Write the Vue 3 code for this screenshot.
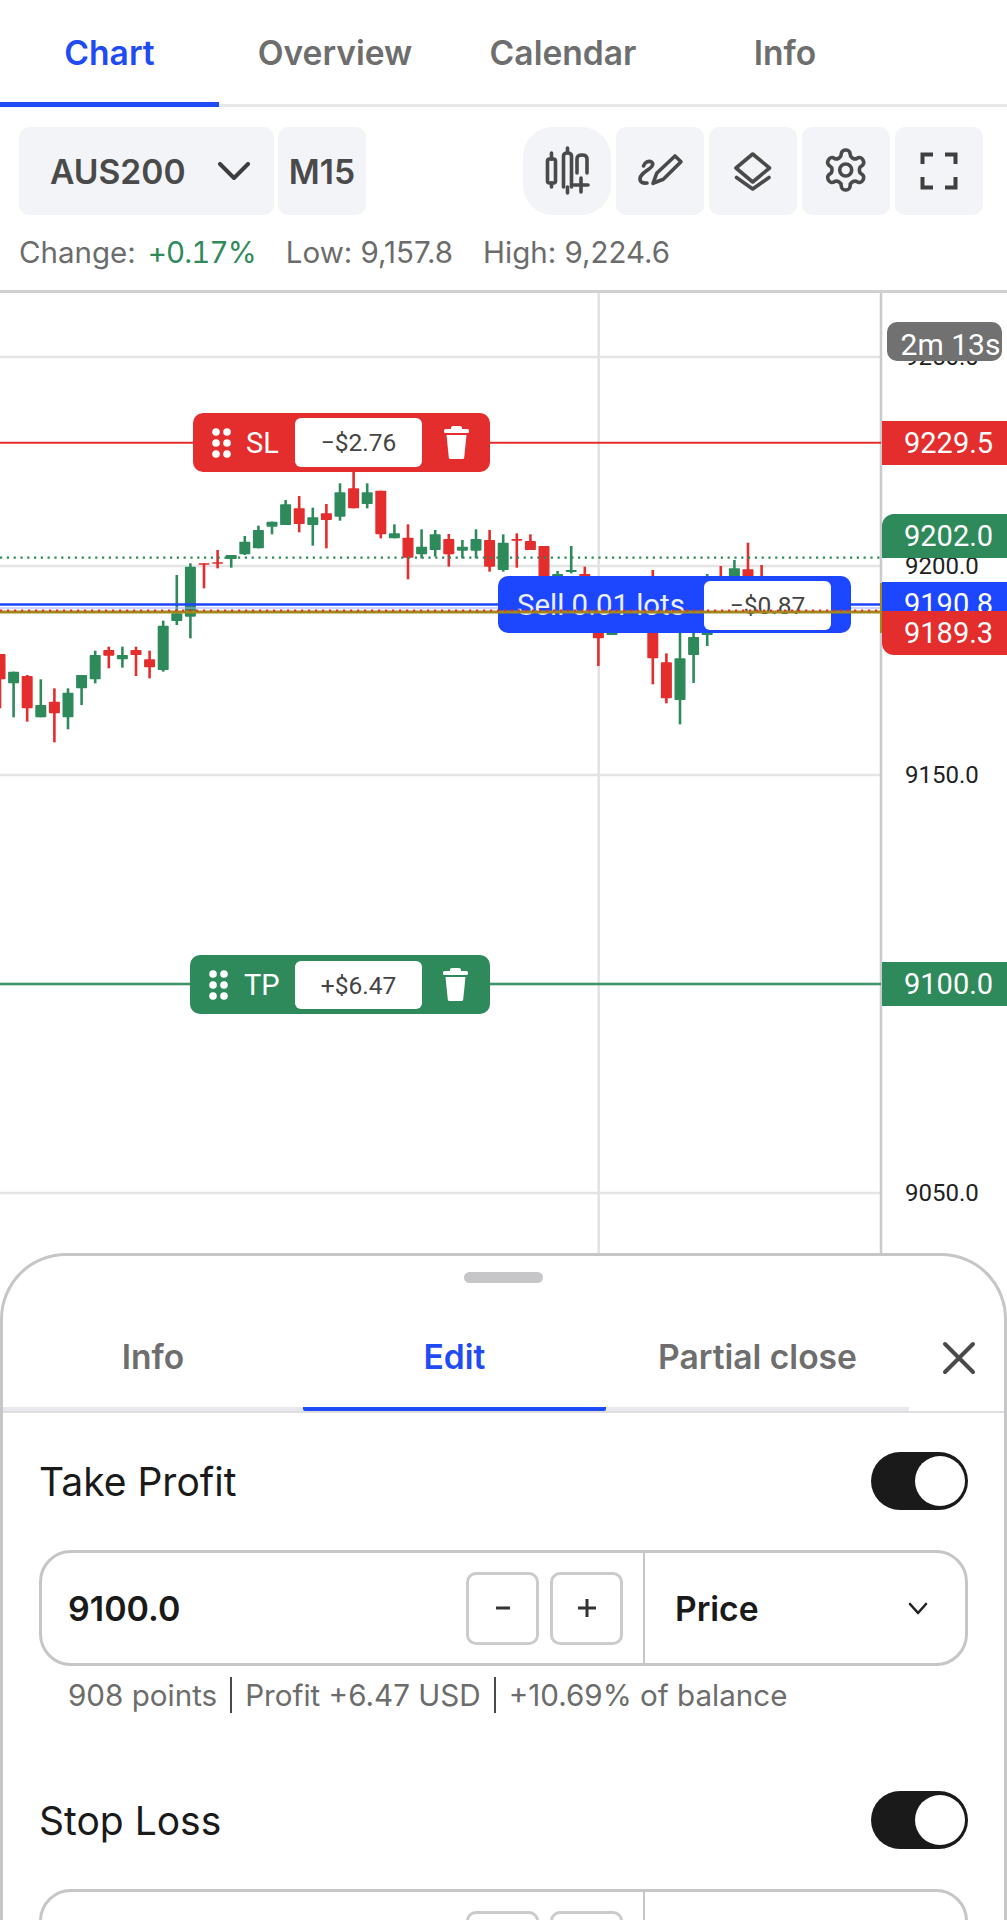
<script setup>
const mainTabs = [
  { label: 'Chart', w: 219, active: true },
  { label: 'Overview', w: 232 },
  { label: 'Calendar', w: 224 },
  { label: 'Info', w: 220 },
]
const sheetTabs = [{ label: 'Info' }, { label: 'Edit', active: true }, { label: 'Partial close' }]

const forms = [
  { title: 'Take Profit', value: '9100.0', hint: ['908 points', 'Profit +6.47 USD', '+10.69% of balance'] },
  { title: 'Stop Loss', value: '9229.5', hint: [] },
]

// price axis: 50 points = 209px
const priceY = (p) => 273 + (9200 - p) * 4.18
const gridPrices = [9250, 9200, 9150, 9100, 9050]

// [colour, wick top, body top, body bottom, wick bottom], traced from the chart
const raw = [
  ['r', 762, 762, 838, 925], ['g', 815, 815, 850, 952], ['r', 825, 828, 925, 965], ['g', 838, 915, 952, 952],
  ['r', 865, 905, 940, 1027], ['g', 865, 878, 952, 988], ['g', 825, 825, 865, 915], ['g', 752, 765, 838, 850],
  ['r', 740, 750, 767, 805], ['g', 740, 765, 778, 803], ['r', 740, 750, 765, 828], ['r', 752, 778, 802, 835],
  ['g', 662, 677, 810, 815], ['g', 525, 640, 663, 675], ['g', 490, 500, 650, 715], ['r', 490, 490, 494, 565],
  ['r', 450, 487, 491, 505], ['g', 465, 465, 477, 503], ['g', 408, 425, 463, 465], ['g', 377, 390, 445, 445],
  ['g', 365, 365, 380, 403], ['g', 300, 313, 375, 375], ['r', 288, 325, 372, 397], ['g', 323, 352, 375, 437],
  ['r', 312, 340, 360, 445], ['g', 250, 277, 350, 362], ['r', 215, 265, 325, 325], ['g', 250, 277, 312, 325],
  ['r', 272, 272, 403, 415], ['g', 373, 400, 415, 415], ['r', 373, 413, 473, 538], ['g', 388, 440, 463, 475],
  ['g', 390, 403, 450, 470], ['r', 402, 417, 463, 500], ['g', 420, 440, 452, 475], ['g', 388, 417, 452, 475],
  ['r', 390, 420, 500, 515], ['g', 403, 428, 510, 515], ['r', 400, 417, 422, 503], ['r', 403, 423, 450, 450],
  ['r', 438, 438, 560, 560], ['g', 513, 522, 600, 620], ['g', 438, 510, 516, 520], ['r', 500, 522, 620, 640],
  ['r', 560, 640, 715, 798], ['g', 600, 640, 705, 705], null, null,
  ['r', 510, 600, 775, 853], ['r', 760, 787, 895, 910], ['g', 640, 775, 900, 973], ['g', 620, 711, 765, 849],
  ['g', 522, 560, 705, 738], ['r', 498, 560, 650, 660], ['g', 480, 505, 620, 640], ['r', 428, 508, 600, 620],
  ['r', 495, 540, 600, 620],
]
const toY = (z) => 107 + z / 3
const candles = raw
  .map((c, i) => c && {
    x: i * 13.6,
    fill: c[0] === 'r' ? '#e42d2d' : '#2f8a5b',
    top: toY(c[1]),
    bodyTop: toY(c[2]),
    bodyH: Math.max((c[3] - c[2]) / 3, 1.5),
    bottom: toY(c[4]),
  })
  .filter(Boolean)

const axisTexts = [9250, 9200, 9150, 9050]
const tags = [
  { price: 9229.5, cls: 'red' },
  { price: 9202.0, cls: 'green top', offset: -44 },
  { price: 9190.8, cls: 'blue' },
  { price: 9189.3, cls: 'red bottom', offset: 0 },
  { price: 9100.0, cls: 'green' },
]
const tagStyle = (t) => ({ top: priceY(t.price) + (t.offset ?? -22) + 'px' })
</script>

<template>
  <div class="page">
    <header class="head">
      <nav class="main-tabs">
        <div
          v-for="t in mainTabs"
          :key="t.label"
          class="main-tab"
          :class="{ on: t.active }"
          :style="{ width: t.w + 'px' }"
        >{{ t.label }}</div>
      </nav>

      <div class="toolbar">
        <div class="tool symbol">
          <span>AUS200</span>
          <svg width="32" height="18" viewBox="0 0 32 18" fill="none" stroke="#3d3d3d" stroke-width="4" stroke-linecap="round" stroke-linejoin="round"><path d="M2 2l14 14L30 2" /></svg>
        </div>
        <div class="tool period">M15</div>
        <div class="tool-right">
          <button class="icon-btn round">
            <svg viewBox="0 0 88 88" fill="none" stroke="#4a4a4a" stroke-width="3.6" stroke-linecap="round" stroke-linejoin="round">
              <rect x="24.5" y="32" width="8" height="24" rx="2" />
              <path d="M28.5 26v6M28.5 56v4" />
              <path d="M44.500 21v5M44.500 60v6M40.500 60V29q0-3 4-3t4 3v31" />
              <path d="M54 46V32q0-4 5-4t5 4v14" />
              <path d="M51 58h14M58 51v14" />
            </svg>
          </button>
          <button class="icon-btn">
            <svg viewBox="0 0 88 88" fill="none" stroke="#4a4a4a" stroke-width="3.6" stroke-linecap="round" stroke-linejoin="round">
              <path d="M37 56.300l3.700-10L59 29l6 5.700L47.300 52.300z" />
              <path d="M27.500 39c1-4 5.500-5.500 8-4 2.500 1.800.8 4.800-2.500 7-4.500 3-9 6-9 10 0 3.500 3.500 4.500 7 4" />
            </svg>
          </button>
          <button class="icon-btn">
            <svg viewBox="0 0 88 88" fill="none" stroke="#4a4a4a" stroke-width="3.6" stroke-linejoin="round" stroke-linecap="round">
              <path d="M43.700 27L60.500 41 43.700 55 27 41z" />
              <path d="M27.500 50.500l16.200 11.500 16.300-11.500" />
            </svg>
          </button>
          <button class="icon-btn">
            <svg viewBox="0 0 88 88">
              <g transform="translate(19.700 19) scale(2)" fill="none" stroke="#4a4a4a" stroke-width="1.800" stroke-linejoin="round">
                <path d="M12.220 2h-.44a2 2 0 0 0-2 2v.18a2 2 0 0 1-1 1.730l-.43.25a2 2 0 0 1-2 0l-.15-.08a2 2 0 0 0-2.730.73l-.22.38a2 2 0 0 0 .73 2.730l.15.1a2 2 0 0 1 1 1.720v.51a2 2 0 0 1-1 1.740l-.15.09a2 2 0 0 0-.73 2.730l.22.38a2 2 0 0 0 2.730.73l.15-.08a2 2 0 0 1 2 0l.43.25a2 2 0 0 1 1 1.730V20a2 2 0 0 0 2 2h.44a2 2 0 0 0 2-2v-.18a2 2 0 0 1 1-1.730l.43-.25a2 2 0 0 1 2 0l.15.08a2 2 0 0 0 2.730-.73l.22-.39a2 2 0 0 0-.73-2.730l-.15-.08a2 2 0 0 1-1-1.740v-.5a2 2 0 0 1 1-1.740l.15-.09a2 2 0 0 0 .73-2.730l-.22-.38a2 2 0 0 0-2.730-.73l-.15.08a2 2 0 0 1-2 0l-.43-.25a2 2 0 0 1-1-1.730V4a2 2 0 0 0-2-2z" />
                <circle cx="12" cy="12" r="3" />
              </g>
            </svg>
          </button>
          <button class="icon-btn">
            <svg viewBox="0 0 88 88" fill="none" stroke="#3f3f3f" stroke-width="4">
              <path d="M27.500 37V27.500H38M50 27.500h10.500V37M27.500 50v10.500H38M50 60.500h10.500V50" />
            </svg>
          </button>
        </div>
      </div>

      <div class="stats">
        <span>Change:</span><span class="up">+0.17%</span><span class="stat">Low: 9,157.8</span><span class="stat">High: 9,224.6</span>
      </div>
    </header>

    <section class="chart">
      <svg class="plot" width="1007" height="960" viewBox="0 0 1007 960">
        <line v-for="p in gridPrices" :key="p" x1="0" x2="881" :y1="priceY(p)" :y2="priceY(p)" stroke="#e4e4e6" stroke-width="2.500" />
        <line x1="598.700" x2="598.700" y1="0" y2="960" stroke="#e2e2e4" stroke-width="2.500" />
        <line x1="881" x2="881" y1="0" y2="960" stroke="#cbcbcd" stroke-width="2.500" />
        <g v-for="(c, i) in candles" :key="i" :fill="c.fill">
          <rect :x="c.x - 1.300" :y="c.top" width="2.600" :height="c.bottom - c.top" />
          <rect :x="c.x - 5.500" :y="c.bodyTop" width="11" :height="c.bodyH" rx="0.800" />
        </g>
        <line x1="0" x2="881" :y1="priceY(9202)" :y2="priceY(9202)" stroke="#2f8a5b" stroke-width="2.200" stroke-dasharray="2.200 4.600" />
        <line x1="0" x2="881" :y1="priceY(9229.5)" :y2="priceY(9229.5)" stroke="#e42d2d" stroke-width="2" />
        <line x1="0" x2="881" :y1="priceY(9100)" :y2="priceY(9100)" stroke="#3f9468" stroke-width="2.400" />
        <line x1="0" x2="881" y1="311.500" y2="311.500" stroke="#1c46ff" stroke-width="2.400" />
        <line x1="0" x2="881" y1="315" y2="315" stroke="#9db0ff" stroke-width="1" />
      </svg>

      <span v-for="p in axisTexts" :key="p" class="axis-text" :style="{ top: priceY(p) - 15 + 'px' }">{{ p.toFixed(1) }}</span>
      <div class="timer">2m 13s</div>

      <div class="order-tag red-tag sl">
        <svg class="grip" width="19" height="30" viewBox="0 0 19 30" fill="#fff"><circle cx="4" cy="4" r="3.800" /><circle cx="15" cy="4" r="3.800" /><circle cx="4" cy="15" r="3.800" /><circle cx="15" cy="15" r="3.800" /><circle cx="4" cy="26" r="3.800" /><circle cx="15" cy="26" r="3.800" /></svg>
        <span class="tag-name">SL</span>
        <span class="tag-val">−$2.76</span>
        <svg class="trash" width="25" height="33" viewBox="0 0 25 33" fill="#fff"><rect x="7" y="0" width="11" height="5" rx="2" /><rect x="0" y="3" width="25" height="4" rx="1.500" /><path d="M2.500 9h20l-2.300 22.500q-.2 1.500-1.700 1.500H6.500q-1.500 0-1.700-1.500z" /></svg>
      </div>

      <div class="order-tag green-tag tp">
        <svg class="grip" width="19" height="30" viewBox="0 0 19 30" fill="#fff"><circle cx="4" cy="4" r="3.800" /><circle cx="15" cy="4" r="3.800" /><circle cx="4" cy="15" r="3.800" /><circle cx="15" cy="15" r="3.800" /><circle cx="4" cy="26" r="3.800" /><circle cx="15" cy="26" r="3.800" /></svg>
        <span class="tag-name">TP</span>
        <span class="tag-val">+$6.47</span>
        <svg class="trash" width="25" height="33" viewBox="0 0 25 33" fill="#fff"><rect x="7" y="0" width="11" height="5" rx="2" /><rect x="0" y="3" width="25" height="4" rx="1.500" /><path d="M2.500 9h20l-2.300 22.500q-.2 1.500-1.700 1.500H6.500q-1.500 0-1.700-1.500z" /></svg>
      </div>

      <div class="order-tag blue-tag sell">
        <span class="sell-name">Sell 0.01 lots</span>
        <span class="tag-val">−$0.87</span>
      </div>

      <span v-for="t in tags" :key="t.price" class="price-tag" :class="t.cls" :style="tagStyle(t)">{{ t.price.toFixed(1) }}</span>

      <svg class="over" width="1007" height="960" viewBox="0 0 1007 960">
        <line x1="0" x2="881" y1="319" y2="319" stroke="#a08a1c" stroke-width="2.800" />
        <line x1="0" x2="881" y1="317.500" y2="317.500" stroke="#e42d2d" stroke-width="2" stroke-dasharray="2.200 4.800" />
        <line x1="881" x2="881" y1="290" y2="340" stroke="#a08a1c" stroke-width="2" />
      </svg>
    </section>

    <section class="sheet">
      <div class="grabber"></div>
      <div class="sheet-tabs">
        <div class="sheet-tab-list">
          <div v-for="t in sheetTabs" :key="t.label" class="sheet-tab" :class="{ on: t.active }">{{ t.label }}</div>
        </div>
        <svg class="close" width="34" height="34" viewBox="0 0 34 34" fill="none" stroke="#4a4a4a" stroke-width="4" stroke-linecap="round"><path d="M3 3l28 28M31 3L3 31" /></svg>
      </div>

      <div class="forms">
        <div v-for="f in forms" :key="f.title" class="form">
          <div class="form-head">
            <span class="form-title">{{ f.title }}</span>
            <span class="switch"><i></i></span>
          </div>
          <div class="field">
            <div class="field-main">
              <span class="field-val">{{ f.value }}</span>
              <span class="step">
                <svg width="18" height="18" viewBox="0 0 18 18" stroke="#333" stroke-width="3"><path d="M2 9h14" /></svg>
              </span>
              <span class="step">
                <svg width="20" height="20" viewBox="0 0 20 20" stroke="#333" stroke-width="3"><path d="M1 10h18M10 1v18" /></svg>
              </span>
            </div>
            <div class="field-type">
              <span>Price</span>
              <svg width="22" height="13" viewBox="0 0 22 13" fill="none" stroke="#222" stroke-width="2.600" stroke-linecap="round" stroke-linejoin="round"><path d="M3 2l8 9 8-9" /></svg>
            </div>
          </div>
          <div v-if="f.hint.length" class="hint">
            <template v-for="(h, i) in f.hint" :key="h">
              <i v-if="i" class="hint-bar"></i>
              <span>{{ h }}</span>
            </template>
          </div>
        </div>
      </div>
    </section>
  </div>
</template>

<style scoped>
.page {
  width: 1007px;
  height: 1920px;
  overflow: hidden;
  background: #fff;
  font-family: Inter, "Liberation Sans", sans-serif;
}

.head {
  height: 293px;
  border-bottom: 3px solid #d0d0d2;
  box-sizing: border-box;
}
.main-tabs {
  display: flex;
  height: 107px;
  border-bottom: 3px solid #e8e8ea;
  box-sizing: border-box;
}
.main-tab {
  height: 107px;
  box-sizing: border-box;
  padding-top: 32px;
  text-align: center;
  font-size: 33.6px;
  line-height: 42px;
  font-weight: 600;
  color: #6e6e6e;
  flex: none;
}
.main-tab.on {
  color: #1f4bf5;
  border-bottom: 5px solid #1f4bf5;
}

.toolbar {
  display: flex;
  margin: 20px 24px 0 19px;
  height: 88px;
  gap: 4px;
}
.tool {
  display: flex;
  align-items: center;
  background: #f3f4f7;
  border-radius: 10px;
  font-size: 33.6px;
  font-weight: 600;
  color: #4a4a4a;
}
.symbol {
  width: 255px;
  padding: 0 24px 0 31px;
  box-sizing: border-box;
  justify-content: space-between;
}
.period {
  width: 88px;
  justify-content: center;
}
.tool-right {
  margin-left: auto;
  display: flex;
  gap: 5px;
}
.icon-btn {
  width: 88px;
  height: 88px;
  padding: 0;
  border: 0;
  background: #f3f4f7;
  border-radius: 10px;
}
.icon-btn.round {
  border-radius: 30px;
}
.icon-btn svg {
  display: block;
  width: 88px;
  height: 88px;
}

.stats {
  margin: 19px 0 0 19px;
  font-size: 29.5px;
  line-height: 36px;
  color: #6c6c6c;
  white-space: nowrap;
}
.stats .up {
  color: #2f8a5b;
  margin-left: 12px;
  font-variant-numeric: tabular-nums;
  letter-spacing: -0.9px;
}
.stats .stat {
  margin-left: 30px;
}

.chart {
  position: relative;
  height: 960px;
  font-family: Roboto, "Liberation Sans", sans-serif;
}
.plot,
.over {
  position: absolute;
  left: 0;
  top: 0;
  display: block;
}
.axis-text {
  position: absolute;
  left: 905px;
  font-size: 24px;
  line-height: 30px;
  color: #222;
}
.timer {
  position: absolute;
  left: 887px;
  top: 29px;
  width: 115px;
  height: 39px;
  padding-left: 12px;
  box-sizing: border-box;
  background: #717171;
  border-radius: 10px;
  color: #fff;
  font-size: 30px;
  line-height: 46px;
  text-align: center;
  white-space: nowrap;
}
.price-tag {
  position: absolute;
  left: 882px;
  width: 125px;
  height: 44px;
  padding-left: 22px;
  box-sizing: border-box;
  color: #fff;
  font-size: 29px;
  line-height: 44px;
}
.price-tag.red { background: #e42d2d; }
.price-tag.green { background: #2f8a5b; }
.price-tag.blue { background: #1c46ff; height: 30px; }
.price-tag.top { border-top-left-radius: 12px; }
.price-tag.bottom { border-bottom-left-radius: 12px; }

.order-tag {
  position: absolute;
  display: flex;
  align-items: center;
  height: 59px;
  box-sizing: border-box;
  border-radius: 10px;
  color: #fff;
  font-size: 29px;
}
.red-tag { background: #e42d2d; }
.green-tag { background: #2f8a5b; }
.blue-tag { background: #1c46ff; }
.sl {
  left: 193px;
  top: 120px;
  width: 297px;
  padding-left: 19px;
}
.tp {
  left: 190px;
  top: 662px;
  width: 300px;
  padding-left: 19px;
}
.sell {
  left: 498px;
  top: 283px;
  width: 353px;
  height: 57px;
  padding-left: 19px;
}
.sell .tag-val {
  position: absolute;
  left: 206px;
  top: 5px;
}
.sell-name {
  font-size: 29.4px;
  color: #eaf0ff;
}
.grip {
  flex: none;
}
.tag-name {
  position: absolute;
  left: 53px;
}
.tp .tag-name {
  left: 54px;
}
.tag-val {
  position: absolute;
  left: 102px;
  top: 5px;
  width: 127px;
  height: 49px;
  background: #fff;
  border-radius: 6px;
  color: #444;
  font-size: 24.5px;
  line-height: 50px;
  text-align: center;
}
.tp .tag-val {
  left: 105px;
  top: 6px;
  height: 48px;
}
.trash {
  position: absolute;
  left: 251px;
  top: 13px;
}
.tp .trash {
  left: 253px;
}

.sheet {
  position: relative;
  background: #fff;
  border: 3px solid #c6c6c8;
  border-bottom: 0;
  border-radius: 66px 66px 0 0;
  height: 700px;
  box-sizing: border-box;
}
.grabber {
  width: 79px;
  height: 11px;
  margin: 16px auto 0;
  background: #c6c6c8;
  border-radius: 6px;
}
.sheet-tabs {
  display: flex;
  height: 128px;
  border-bottom: 2px solid #dedee2;
  box-sizing: content-box;
}
.sheet-tab-list {
  display: flex;
  width: 906px;
  height: 128px;
  border-bottom: 4px solid #e9e9ed;
  box-sizing: border-box;
  flex: none;
}
.sheet-tab {
  width: 303px;
  height: 128px;
  box-sizing: border-box;
  padding-top: 53px;
  text-align: center;
  font-size: 33.6px;
  line-height: 42px;
  font-weight: 600;
  color: #6e6e6e;
  flex: none;
}
.sheet-tab:first-child {
  width: 300px;
}
.sheet-tab.on {
  color: #1f4bf5;
  border-bottom: 4px solid #1f4bf5;
  border-radius: 0 0 2px 2px;
}
.close {
  margin: 58px 0 0 33px;
  flex: none;
}

.forms {
  padding: 0 36px;
}
.form {
  padding-top: 39px;
}
.form + .form {
  padding-top: 78px;
}
.form-head {
  display: flex;
  align-items: center;
  justify-content: space-between;
  height: 58px;
}
.form-title {
  font-size: 39px;
  color: #1a1a1a;
}
.switch {
  display: block;
  position: relative;
  width: 97px;
  height: 58px;
  border-radius: 29px;
  background: #1a1a1a;
}
.switch i {
  position: absolute;
  right: 3px;
  top: 4px;
  width: 50px;
  height: 50px;
  border-radius: 50%;
  background: #fff;
}
.field {
  display: flex;
  margin-top: 40px;
  height: 116px;
  border: 3px solid #c6c6c8;
  border-radius: 32px;
  box-sizing: border-box;
}
.field-main {
  width: 603px;
  display: flex;
  align-items: center;
  gap: 11px;
  padding: 0 20px 0 26px;
  box-sizing: border-box;
  border-right: 2px solid #c6c6c8;
  flex: none;
}
.field-val {
  margin-right: auto;
  font-size: 34px;
  font-weight: 600;
  color: #1a1a1a;
}
.step {
  display: flex;
  align-items: center;
  justify-content: center;
  width: 73px;
  height: 73px;
  box-sizing: border-box;
  border: 3px solid #cbcbcd;
  border-radius: 10px;
}
.field-type {
  flex: 1;
  display: flex;
  align-items: center;
  justify-content: space-between;
  padding: 0 36px 0 30px;
  font-size: 33.6px;
  font-weight: 600;
  color: #1a1a1a;
}
.hint {
  display: flex;
  align-items: center;
  margin-top: 11px;
  padding-left: 29px;
  height: 36px;
  font-size: 29.6px;
  color: #6c6c6c;
  white-space: nowrap;
}
.hint-bar {
  width: 2px;
  height: 36px;
  margin: 0 13px;
  background: #4a4a4a;
}
</style>
